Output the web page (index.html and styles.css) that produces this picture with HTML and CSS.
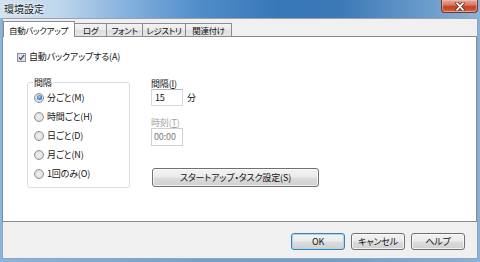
FILE: index.html
```html
<!DOCTYPE html>
<html lang="ja">
<head>
<meta charset="utf-8">
<title>環境設定</title>
<link rel="stylesheet" href="styles.css">
</head>
<body>
<div class="window">
  <div class="titlebar">
    <span class="title">環境設定</span>
    <div class="close">
      <svg width="12" height="9" viewBox="0 0 12 9"><path d="M3 1.2 L9 7.8 M9 1.2 L3 7.8" stroke="#5a1f16" stroke-width="3.2" stroke-linecap="round" fill="none"/><path d="M3 1.2 L9 7.8 M9 1.2 L3 7.8" stroke="#ffffff" stroke-width="1.8" stroke-linecap="round" fill="none"/></svg>
    </div>
  </div>
  <div class="client">
    <div class="tabs">
      <div class="tab active">自動バックアップ</div>
      <div class="tab tab-log">ログ</div>
      <div class="tab tab-font">フォント</div>
      <div class="tab tab-reg">レジストリ</div>
      <div class="tab tab-assoc">関連付け</div>
    </div>
    <div class="panel">
      <div class="check-row">
        <span class="checkbox">
          <svg width="9" height="9" viewBox="0 0 9 9"><rect x="0.5" y="0.5" width="8" height="8" fill="#f6f6f6" stroke="#8e8f8f"/><rect x="1.5" y="1.5" width="6" height="6" fill="#e4e4e4" stroke="#cfd2d6" stroke-width="0.6"/><path d="M2.1 4.6 L3.8 6.4 L7 2.1" stroke="#3b5590" stroke-width="1.4" fill="none"/></svg>
        </span>
        <span>自動バックアップする(A)</span>
      </div>
      <div class="settings">
        <fieldset class="group">
          <legend class="group-title">間隔</legend>
          <div class="radio-row"><span class="radio checked"></span><span>分ごと(M)</span></div>
          <div class="radio-row"><span class="radio"></span><span>時間ごと(H)</span></div>
          <div class="radio-row"><span class="radio"></span><span>日ごと(D)</span></div>
          <div class="radio-row"><span class="radio"></span><span>月ごと(N)</span></div>
          <div class="radio-row"><span class="radio"></span><span>1回のみ(O)</span></div>
        </fieldset>
        <div class="right-col">
          <div class="field-label">間隔(<u>I</u>)</div>
          <div class="input-row">
            <div class="input">15</div>
            <span>分</span>
          </div>
          <div class="field-label disabled">時刻(<u>T</u>)</div>
          <div class="input disabled-input">00:00</div>
          <div class="button wide">スタートアップ・タスク設定(S)</div>
        </div>
      </div>
    </div>
    <div class="footer">
      <div class="button default">OK</div>
      <div class="button">キャンセル</div>
      <div class="button">ヘルプ</div>
    </div>
  </div>
</div>
</body>
</html>
```
FILE: styles.css
```css
* {
  box-sizing: border-box;
  margin: 0;
  padding: 0;
}

html, body {
  width: 480px;
  height: 262px;
  overflow: hidden;
}

body {
  font-family: "Noto Sans CJK JP", "Noto Sans", sans-serif;
  font-size: 9px;
  line-height: 12px;
  letter-spacing: -0.15px;
  color: #111;
  font-feature-settings: "palt";
  background: #fff;
}

.window {
  width: 480px;
  height: 262px;
  display: flex;
  flex-direction: column;
  padding-bottom: 3px;
  background: linear-gradient(to right, #86b6e2 0%, #6fa3d6 40%, #6a9fd2 70%, #86b2dc 100%);
}

.titlebar {
  height: 18px;
  flex: none;
  display: flex;
  justify-content: space-between;
  align-items: flex-start;
  padding-right: 2px;
  background: linear-gradient(to right, #d3e3f2 0%, #c0d7ed 12%, #86b2de 26%, #4e8cc9 42%, #3877b7 58%, #3a78b6 70%, #5d92c6 84%, #8db2d6 100%);
}

.title {
  padding: 3px 0 0 4px;
  font-size: 10px;
  line-height: 12px;
  letter-spacing: 0;
  color: #1a1a1a;
  text-shadow: 0 0 3px rgba(255, 255, 255, 0.9), 0 0 5px rgba(255, 255, 255, 0.7);
}

.close {
  width: 37px;
  height: 13px;
  display: flex;
  align-items: center;
  justify-content: center;
  border: 1px solid #6b3a33;
  border-top: none;
  border-radius: 0 0 4px 4px;
  background: linear-gradient(to bottom, #e6a89a 0%, #d97a67 40%, #c4432a 55%, #c9502f 80%, #d97a5d 100%);
  box-shadow: inset 0 0 0 1px rgba(255, 200, 190, 0.5);
}

.client {
  flex: 1;
  margin: 0 2px;
  display: flex;
  flex-direction: column;
  background: #f0f0f0;
  border: 1px solid #9aa3ad;
}

.tabs {
  display: flex;
  align-items: flex-end;
  height: 18px;
  padding-top: 2px;
  margin-bottom: -1px;
  position: relative;
  z-index: 1;
}

.tab {
  height: 13px;
  margin-bottom: 1px;
  font-size: 8.5px;
  line-height: 12px;
  letter-spacing: -0.35px;
  text-align: center;
  border: 1px solid #898c95;
  border-bottom: none;
  margin-left: -1px;
  background: linear-gradient(to bottom, #f3f3f3 0%, #ebebeb 50%, #dedede 51%, #e6e6e6 100%);
  color: #111;
  white-space: nowrap;
  overflow: hidden;
}

.tab.active {
  width: 72px;
  height: 16px;
  margin-bottom: 0;
  margin-left: 0;
  padding: 2px 0 0 5px;
  text-align: left;
  background: #fff;
  position: relative;
  z-index: 2;
}

.tab-log {
  width: 33px;
}

.tab-font {
  width: 37px;
}

.tab-reg {
  width: 44px;
}

.tab-assoc {
  width: 47px;
}

.panel {
  height: 186px;
  margin-left: -1px;
  border: 1px solid #898c95;
  background: #fff;
  padding: 14px 0 0 14px;
}

.check-row {
  display: flex;
  align-items: center;
  gap: 3px;
  height: 12px;
}

.checkbox {
  width: 9px;
  height: 9px;
  display: flex;
}

.settings {
  display: flex;
  align-items: flex-start;
  margin-top: 14px;
}

.group {
  margin-left: 10px;
  width: 103px;
  min-width: 0;
  border: 1px solid #d5dfe5;
  border-radius: 3px;
  padding: 0 0 4px 6px;
}

.group-title {
  font-size: 9px;
  line-height: 11px;
  padding: 0 1px;
  margin-left: -1px;
}

.radio-row {
  display: flex;
  align-items: center;
  gap: 3px;
  height: 19px;
}

.radio {
  width: 10px;
  height: 10px;
  border-radius: 50%;
  border: 1px solid #8f9294;
  background: radial-gradient(circle at 50% 50%, #f2f2f2 0%, #e2e2e2 55%, #cfcfcf 100%);
  display: flex;
  align-items: center;
  justify-content: center;
}

.radio.checked::after {
  content: "";
  width: 5px;
  height: 5px;
  border-radius: 50%;
  background: radial-gradient(circle at 45% 40%, #a8e0fb 0%, #3f93d6 45%, #1b4f8e 100%);
}

.right-col {
  margin-left: 21px;
  margin-top: 2px;
  display: flex;
  flex-direction: column;
  align-items: flex-start;
}

.field-label {
  line-height: 10px;
  color: #111;
}

.field-label.disabled {
  margin-top: 12px;
  color: #a3a3a3;
}

.input-row {
  display: flex;
  align-items: center;
  gap: 4px;
}

.input {
  width: 32px;
  height: 17px;
  padding-left: 3px;
  line-height: 15px;
  border: 1px solid #d6d9de;
  border-top-color: #b5b8be;
  background: #fff;
  color: #111;
}

.disabled-input {
  height: 18px;
  line-height: 16px;
  padding-left: 2px;
  border-color: #cfd1d4;
  color: #7c7c7c;
}

.button {
  height: 17px;
  width: 54px;
  border: 1px solid #707070;
  border-radius: 3px;
  background: linear-gradient(to bottom, #f2f2f2 0%, #ebebeb 48%, #dddddd 52%, #cfcfcf 100%);
  box-shadow: inset 0 0 0 1px rgba(255, 255, 255, 0.7);
  display: flex;
  align-items: center;
  justify-content: center;
  color: #111;
  white-space: nowrap;
}

.button.wide {
  width: 167px;
  height: 19px;
  margin-top: 22px;
  margin-left: 1px;
}

.button.default {
  border-color: #3c7fb1;
  box-shadow: inset 0 0 0 1px #a9d8f2;
}

.footer {
  flex: 1;
  display: flex;
  justify-content: flex-end;
  align-items: flex-start;
  gap: 6px;
  padding: 11px 12px 0 0;
}
```
